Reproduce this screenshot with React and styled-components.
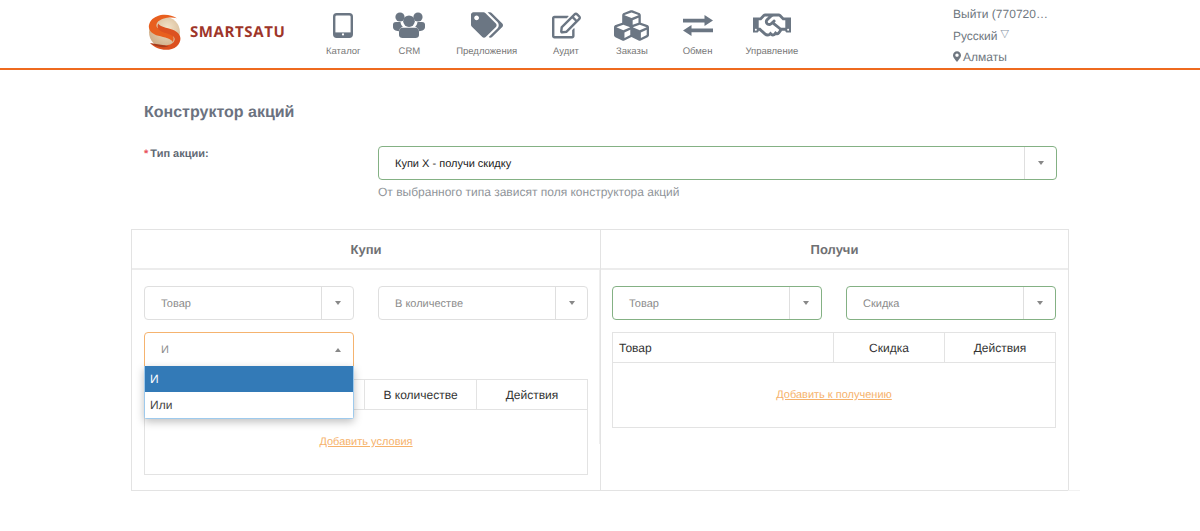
import React from "react";
import styled, { createGlobalStyle } from "styled-components";
import { FaTags, FaRegEdit, FaCubes, FaRegHandshake, FaMapMarkerAlt } from "react-icons/fa";

const GlobalStyle = createGlobalStyle`
  html, body {
    margin: 0;
    padding: 0;
    background: #fff;
    font-family: "Liberation Sans", Arial, sans-serif;
    color: #333;
    text-rendering: geometricPrecision;
  }
  * { box-sizing: border-box; }
`;

const TabletIcon = () => (
  <svg width="20" height="25" viewBox="0 0 20 25">
    <rect x="1.2" y="1.2" width="17.6" height="22.6" rx="2.5" fill="none" stroke="#6b7683" strokeWidth="2.4" />
    <rect x="2" y="19.4" width="16" height="4" fill="#6b7683" />
    <circle cx="10" cy="21.4" r="1.1" fill="#fff" />
  </svg>
);

const UsersIcon = () => (
  <svg width="32" height="26" viewBox="0 0 32 26" fill="#6b7683">
    <circle cx="7" cy="5" r="4.6" />
    <circle cx="25" cy="5" r="4.6" />
    <path d="M0 12.5C0 10.8 1.5 10 3 10H7.5C7.8 12 8.5 13.6 9.8 14.8C7.6 15.6 6.2 17.2 5.8 19.2C2.5 19 0 17.6 0 15Z" />
    <path d="M32 12.5C32 10.8 30.5 10 29 10H24.5C24.2 12 23.5 13.6 22.2 14.8C24.4 15.6 25.8 17.2 26.2 19.2C29.5 19 32 17.6 32 15Z" />
    <circle cx="16" cy="9.2" r="5.8" />
    <path d="M9.5 15.8H22.5C25 15.8 26 17.6 26 20V23C26 24.8 24.5 26 22.5 26H9.5C7.5 26 6 24.8 6 23V20C6 17.6 7 15.8 9.5 15.8Z" />
  </svg>
);

const ExchangeIcon = () => (
  <svg width="30" height="21" viewBox="0 0 30 21" fill="#6b7683">
    <path d="M0 3.8H21.5V0L30 5.5L21.5 11V7.4H0Z" />
    <path d="M30 13.6H8.5V10L0 15.5L8.5 21V17.2H30Z" />
  </svg>
);

const LogoMark = () => (
  <svg width="34" height="37" viewBox="1 1 33 35.5">
    <defs>
      <radialGradient id="sand" cx="0.6" cy="0.35" r="0.8">
        <stop offset="0" stopColor="#f1e2c8" />
        <stop offset="1" stopColor="#c9a47c" />
      </radialGradient>
    </defs>
    <circle cx="17" cy="18.5" r="15" fill="url(#sand)" />
    <path d="M29 5C22 0 10 0 4 7C-1 14 3 20 11 22C17 23.5 24 25 25 28C27 24 26 20 19 18C12 16 7 14 10 9C13 5 23 3 29 5Z" fill="#e85f1e" />
    <path d="M3 29C9 36 22 38 29 32C35 26 33 19 25 16C19 14 12 13 11 10C9 14 11 17 17 19C24 21 29 23 26 28C23 32 12 33 3 29Z" fill="#dc5120" />
    <path d="M3 29C8 33 16 34 21 32C16 31 8 30 3 29Z" fill="#a83c1c" />
  </svg>
);

const navItems = [
  { label: "Каталог", gap: 0, icon: <TabletIcon /> },
  { label: "CRM", gap: 38, icon: <UsersIcon /> },
  { label: "Предложения", gap: 36, icon: <FaTags size={32} /> },
  { label: "Аудит", gap: 36, icon: <FaRegEdit size={29} /> },
  { label: "Заказы", gap: 37, icon: <FaCubes size={35} /> },
  { label: "Обмен", gap: 35, icon: <ExchangeIcon /> },
  { label: "Управление", gap: 33, icon: <FaRegHandshake size={38} /> },
];

const Select = ({ value, valid, open, main, wide }) => (
  <SelectBox $valid={valid} $open={open} $wide={wide}>
    <SelectValue $main={main}>{value}</SelectValue>
    <SelectArrow $open={open}>
      <Caret $up={open} />
    </SelectArrow>
    {open && (
      <Menu>
        <MenuItem $active>И</MenuItem>
        <MenuItem>Или</MenuItem>
      </Menu>
    )}
  </SelectBox>
);

const App = () => (
  <>
    <GlobalStyle />
    <Header>
      <Logo>
        <LogoMark />
        <LogoText>SMARTSATU</LogoText>
      </Logo>
      <Nav>
        {navItems.map(item => (
          <NavItem key={item.label} $gap={item.gap}>
            <NavIcon>{item.icon}</NavIcon>
            <NavLabel>{item.label}</NavLabel>
          </NavItem>
        ))}
      </Nav>
      <UserBlock>
        <UserLine>Выйти (770720…</UserLine>
        <UserLine $low>
          Русский <LangMark>▽</LangMark>
        </UserLine>
        <UserLine>
          <PinIcon /> Алматы
        </UserLine>
      </UserBlock>
    </Header>
    <Main>
      <Title>Конструктор акций</Title>
      <TypeRow>
        <TypeLabel>
          <Required>*</Required> Тип акции:
        </TypeLabel>
        <TypeField>
          <Select value="Купи X - получи скидку" valid main wide />
          <Hint>От выбранного типа зависят поля конструктора акций</Hint>
        </TypeField>
      </TypeRow>
      <Panel>
        <Column>
          <ColumnHead>Купи</ColumnHead>
          <ColumnBody>
            <SelectGrid>
              <Select value="Товар" />
              <Select value="В количестве" />
              <Select value="И" open />
            </SelectGrid>
            <RuleTable>
              <colgroup>
                <col style={{ width: 220 }} />
                <col style={{ width: 112 }} />
                <col />
              </colgroup>
              <thead>
                <tr>
                  <HeadCell />
                  <HeadCell $center>В количестве</HeadCell>
                  <HeadCell $center>Действия</HeadCell>
                </tr>
              </thead>
              <tbody>
                <tr>
                  <BodyCell colSpan={3}>
                    <AddLink href="#">Добавить условия</AddLink>
                  </BodyCell>
                </tr>
              </tbody>
            </RuleTable>
          </ColumnBody>
        </Column>
        <Column $right>
          <ColumnHead>Получи</ColumnHead>
          <ColumnBody $right>
            <SelectGrid>
              <Select value="Товар" valid />
              <Select value="Скидка" valid />
            </SelectGrid>
            <RuleTable>
              <colgroup>
                <col style={{ width: 221 }} />
                <col style={{ width: 111 }} />
                <col />
              </colgroup>
              <thead>
                <tr>
                  <HeadCell>Товар</HeadCell>
                  <HeadCell $center>Скидка</HeadCell>
                  <HeadCell $center>Действия</HeadCell>
                </tr>
              </thead>
              <tbody>
                <tr>
                  <BodyCell colSpan={3}>
                    <AddLink href="#">Добавить к получению</AddLink>
                  </BodyCell>
                </tr>
              </tbody>
            </RuleTable>
          </ColumnBody>
        </Column>
      </Panel>
    </Main>
  </>
);

const Header = styled.header`
  display: flex;
  height: 70px;
  padding-left: 148px;
  border-bottom: 2px solid #ee6a1f;
`;

const Logo = styled.div`
  display: flex;
  align-items: center;
  gap: 8px;
  width: 160px;
  height: 64px;
`;

const LogoText = styled.span`
  font-family: "Open Sans", sans-serif;
  font-size: 15px;
  font-weight: 700;
  letter-spacing: 0.6px;
  color: #9e3529;
`;

const Nav = styled.nav`
  display: flex;
  width: 645px;
  padding-left: 18px;
`;

const NavItem = styled.div`
  display: flex;
  flex-direction: column;
  align-items: center;
  margin-left: ${p => p.$gap}px;
`;

/* zero width so a wide icon does not push its label around */
const NavIcon = styled.div`
  display: flex;
  align-items: center;
  justify-content: center;
  width: 0;
  height: 26px;
  margin-top: 12px;
  color: #6b7683;

  svg {
    flex-shrink: 0;
  }
`;

const NavLabel = styled.span`
  margin-top: 8px;
  font-size: 9.5px;
  line-height: 12px;
  color: #777;
  white-space: nowrap;
`;

const UserBlock = styled.div`
  display: flex;
  flex-direction: column;
  gap: 6px;
  padding-top: 6px;
`;

const UserLine = styled.div`
  display: flex;
  align-items: center;
  gap: 2px;
  height: 15.5px;
  padding-top: ${p => (p.$low ? "1px" : "0")};
  font-size: 12px;
  color: #6f7780;
  white-space: nowrap;
`;

const PinIcon = styled(FaMapMarkerAlt)`
  width: 8px;
  height: 11px;
`;

const LangMark = styled.span`
  margin-left: 1px;
  font-size: 11px;
  color: #8a97a8;
  transform: translateY(-2px);
`;

const Main = styled.main`
  padding: 33px 0 0 131px;
`;

const Title = styled.h1`
  margin: 0 0 0 13px;
  font-size: 16px;
  line-height: 20px;
  font-weight: 700;
  color: #6b7280;
`;

const TypeRow = styled.div`
  display: flex;
  margin: 23px 0 0 13px;
`;

const TypeLabel = styled.label`
  width: 234px;
  padding-top: 1px;
  font-size: 11px;
  line-height: 14px;
  font-weight: 700;
  color: #5f6873;
`;

const Required = styled.span`
  margin-right: -1px;
  color: #e8505b;
`;

const TypeField = styled.div`
  display: flex;
  flex-direction: column;
`;

const Hint = styled.div`
  margin-top: 4px;
  font-size: 12px;
  line-height: 16px;
  color: #90959a;
`;

const SelectBox = styled.div`
  position: relative;
  display: flex;
  align-items: stretch;
  width: ${p => (p.$wide ? "679px" : "210px")};
  height: ${p => (p.$open ? "35px" : "34px")};
  background: #fff;
  border: 1px solid ${p => (p.$open ? "#f5b36f" : p.$valid ? "#84b184" : "#dfdfdf")};
  border-radius: ${p => (p.$open ? "4px 4px 0 0" : "4px")};
`;

const SelectValue = styled.div`
  flex: 1;
  padding-left: 16px;
  font-size: 11px;
  line-height: 34px;
  color: ${p => (p.$main ? "#222" : "#8b8b8b")};
`;

const SelectArrow = styled.div`
  display: flex;
  align-items: center;
  justify-content: center;
  width: 32px;
  border-left: 1px solid ${p => (p.$open ? "transparent" : "#dfdfdf")};
`;

const Caret = styled.i`
  display: block;
  width: 0;
  height: 0;
  border-left: 3.5px solid transparent;
  border-right: 3.5px solid transparent;
  border-top: ${p => (p.$up ? "0" : "4px solid #888")};
  border-bottom: ${p => (p.$up ? "4px solid #888" : "0")};
`;

const Menu = styled.ul`
  position: absolute;
  top: 33px;
  left: -1px;
  z-index: 5;
  width: 210px;
  margin: 0;
  padding: 0;
  list-style: none;
  background: #fff;
  border: 1px solid #9ecaed;
  border-top: 0;
  border-radius: 0 0 3px 3px;
  box-shadow: 0 3px 8px rgba(0, 0, 0, 0.25);
`;

const MenuItem = styled.li`
  height: 26px;
  padding-left: 5px;
  font-size: 12px;
  line-height: 26px;
  color: ${p => (p.$active ? "#fff" : "#444")};
  background: ${p => (p.$active ? "#337ab7" : "#fff")};
`;

const Panel = styled.section`
  position: relative;
  display: flex;
  width: 938px;
  height: 262px;
  margin-top: 29px;
  border: 1px solid #e3e3e3;

  &::after {
    content: "";
    position: absolute;
    right: -12px;
    bottom: -1px;
    width: 12px;
    height: 1px;
    background: #f2f2f2;
  }
`;

const Column = styled.div`
  flex: ${p => (p.$right ? "1" : "0 0 468px")};
  border-left: ${p => (p.$right ? "1px solid #e3e3e3" : "0")};
`;

const ColumnHead = styled.div`
  height: 40px;
  font-size: 13px;
  font-weight: 700;
  line-height: 39px;
  text-align: center;
  color: #6f7073;
  border-bottom: 2px solid #ececec;
`;

const ColumnBody = styled.div`
  height: 174px;
  padding: 16px 0 0 ${p => (p.$right ? "11px" : "12px")};
  border-right: ${p => (p.$right ? "0" : "1px solid #eee")};
`;

const SelectGrid = styled.div`
  display: grid;
  grid-template-columns: 210px 210px;
  gap: 12px 24px;
`;

const RuleTable = styled.table`
  width: 444px;
  margin-top: 12px;
  table-layout: fixed;
  border-collapse: collapse;
  border: 1px solid #e3e3e3;
`;

const HeadCell = styled.th`
  height: 30px;
  padding: 0 6px;
  font-size: 12px;
  font-weight: 400;
  text-align: ${p => (p.$center ? "center" : "left")};
  color: #333;
  border: 1px solid #e3e3e3;
`;

const BodyCell = styled.td`
  height: 65px;
  padding: 0 0 2px;
  text-align: center;
`;

const AddLink = styled.a`
  font-size: 11px;
  color: #f6b26b;
  text-decoration: underline;
`;

export default App;
